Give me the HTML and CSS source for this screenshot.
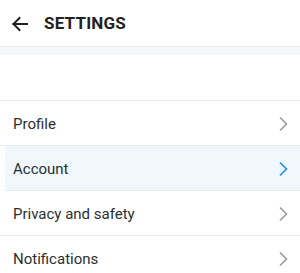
FILE: index.html
```html
<!DOCTYPE html>
<html>
<head>
<meta charset="utf-8">
<link rel="stylesheet" href="styles.css">
</head>
<body>
<header class="topbar">
  <svg class="back" width="18" height="18" viewBox="0 0 18 18" fill="none" stroke="#222" stroke-width="2" stroke-linecap="square">
    <path d="M16 9H2.5"/>
    <path d="M8.5 3L2.5 9l6 6"/>
  </svg>
  <h1 class="title">SETTINGS</h1>
</header>
<div class="band"></div>
<div class="spacer"></div>
<ul class="list">
  <li class="row"><span>Profile</span><svg class="chev" width="10" height="16" viewBox="0 0 10 16"><path d="M2 1.5l6.5 6.5-6.5 6.5" fill="none" stroke="currentColor" stroke-width="1.6"/></svg></li>
  <li class="row active"><span>Account</span><svg class="chev" width="10" height="16" viewBox="0 0 10 16"><path d="M2 1.5l6.5 6.5-6.5 6.5" fill="none" stroke="currentColor" stroke-width="1.6"/></svg></li>
  <li class="row"><span>Privacy and safety</span><svg class="chev" width="10" height="16" viewBox="0 0 10 16"><path d="M2 1.5l6.5 6.5-6.5 6.5" fill="none" stroke="currentColor" stroke-width="1.6"/></svg></li>
  <li class="row"><span>Notifications</span><svg class="chev" width="10" height="16" viewBox="0 0 10 16"><path d="M2 1.5l6.5 6.5-6.5 6.5" fill="none" stroke="currentColor" stroke-width="1.6"/></svg></li>
</ul>
</body>
</html>
```
FILE: styles.css
```css
html, body {
  margin: 0;
  padding: 0;
  background: #fff;
  font-family: Roboto, "Liberation Sans", Arial, sans-serif;
  color: #222;
}
.topbar {
  height: 47px;
  display: flex;
  align-items: center;
  padding-left: 11px;
  border-bottom: 1px solid #e6ecf0;
  box-sizing: border-box;
}
.back {
  display: block;
  margin-top: 1px;
}
.title {
  margin: 0 0 0 15px;
  font-size: 17px;
  font-weight: 700;
  letter-spacing: 0.2px;
  color: #222;
}
.band {
  height: 8px;
  background: #f5f8fa;
}
.spacer {
  height: 45px;
  border-bottom: 1px solid #e6ecf0;
}
.list {
  list-style: none;
  margin: 0;
  padding: 0;
}
.row {
  height: 44px;
  display: flex;
  align-items: center;
  justify-content: space-between;
  padding: 2px 12px 0 13px;
  box-sizing: border-box;
  height: 45px;
  border-bottom: 1px solid #e6ecf0;
  font-size: 15px;
  color: #292f33;
}
.row .chev {
  color: #999;
}
.row.active {
  margin-left: 5px;
  padding-left: 8px;
  background: #f0f8fe;
}
.row.active .chev {
  color: #1d8ee6;
}
```
